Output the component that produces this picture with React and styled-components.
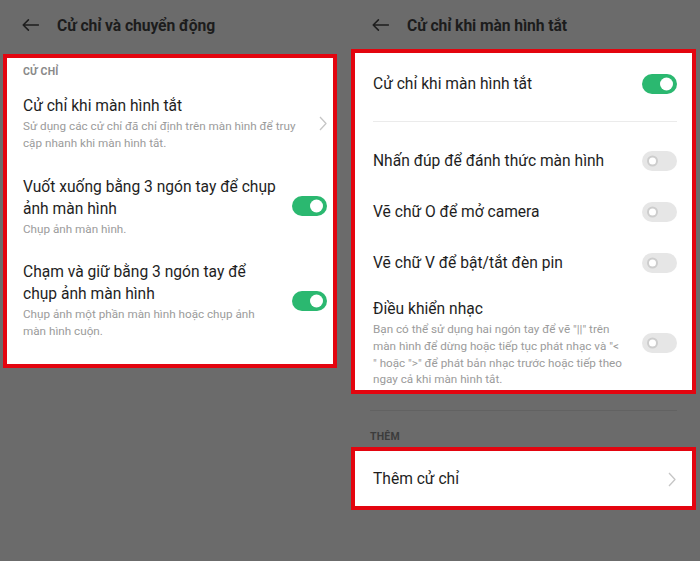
import React from 'react'
import styled, { createGlobalStyle } from 'styled-components'

const GlobalStyle = createGlobalStyle`
  html, body {
    margin: 0;
    padding: 0;
    background: #6b6b6b;
  }
  body {
    font-family: Roboto, "Noto Sans", "Liberation Sans", sans-serif;
    -webkit-font-smoothing: antialiased;
  }
`

const Screen = styled.div`
  display: grid;
  grid-template-columns: 345px 355px;
  width: 700px;
  height: 561px;
  overflow: hidden;
  background: #6b6b6b;
`

const Panel = styled.div`
  display: flex;
  flex-direction: column;
  padding: ${(p) => p.$pad};
`

const Header = styled.div`
  display: flex;
  align-items: center;
  height: 48px;
  padding-top: 1px;
  padding-left: ${(p) => p.$inset}px;
  gap: ${(p) => p.$gap}px;
`

const Title = styled.h1`
  margin: 0;
  font-size: 15.7px;
  font-weight: 700;
  color: #1c1c1c;
  letter-spacing: -0.1px;
`

const Card = styled.div`
  border: 4px solid #e3050f;
  background: #fff;
  margin-top: ${(p) => p.$top || 0}px;
  padding: ${(p) => p.$pad};
`

const SectionLabel = styled.div`
  font-size: 10.5px;
  font-weight: 700;
  line-height: 14px;
  letter-spacing: 0.2px;
  color: ${(p) => (p.$dark ? '#3c3c3c' : '#8a8a8a')};
  padding-top: ${(p) => p.$top || 0}px;
  padding-left: ${(p) => p.$left || 0}px;
  margin-bottom: ${(p) => p.$bottom || 0}px;
`

const Row = styled.div`
  display: flex;
  align-items: center;
  justify-content: space-between;
  gap: 10px;
  padding: ${(p) => p.$pad || '12px 0'};
`

const TextCol = styled.div`
  display: flex;
  flex-direction: column;
  min-width: 0;
`

const ItemTitle = styled.div`
  font-size: 15.6px;
  line-height: 22px;
  color: #1e1e1e;
  white-space: nowrap;
`

const ItemSub = styled.div`
  margin-top: 1px;
  font-size: 11.7px;
  line-height: 16.8px;
  color: #9b9b9b;
  white-space: nowrap;
`

const Divider = styled.div`
  height: 1px;
  background: ${(p) => p.$color || '#ebebeb'};
  margin: ${(p) => p.$margin};
`

const Track = styled.div`
  position: relative;
  flex: none;
  width: 35px;
  height: 20px;
  border-radius: 10px;
  background: ${(p) => (p.$on ? '#2bb870' : '#e6e6e6')};
`

const Knob = styled.span`
  position: absolute;
  top: 50%;
  transform: translateY(-50%);
  border-radius: 50%;
  background: #fff;
  ${(p) =>
    p.$on
      ? 'right: 4px; width: 13px; height: 13px;'
      : 'left: 5px; width: 7px; height: 7px; border: 2px solid #cdcdcd;'}
`

const Toggle = ({ on }) => (
  <Track $on={on}>
    <Knob $on={on} />
  </Track>
)

const Back = () => (
  <svg width="17" height="12" viewBox="0 0 17 12" fill="none">
    <path
      d="M1.2 6 H16.5 M6.4 0.9 L1.2 6 L6.4 11.1"
      stroke="#1e1e1e"
      strokeWidth="1.5"
      strokeLinecap="round"
      strokeLinejoin="round"
    />
  </svg>
)

const Chevron = () => (
  <svg width="8" height="15" viewBox="0 0 8 15" fill="none" style={{ flex: 'none' }}>
    <path d="M1 1 L7 7.5 L1 14" stroke="#c6c6c6" strokeWidth="1.3" strokeLinejoin="round" />
  </svg>
)

const App = () => (
  <>
    <GlobalStyle />
    <Screen>
      <Panel $pad="0 8px 0 3px">
        <Header $inset={19} $gap={18}>
          <Back />
          <Title>Cử chỉ và chuyển động</Title>
        </Header>
        <Card $top={5} $pad="0 6px 12px 16px">
          <SectionLabel $top={7} $bottom={4}>CỬ CHỈ</SectionLabel>
          <Row>
            <TextCol>
              <ItemTitle>Cử chỉ khi màn hình tắt</ItemTitle>
              <ItemSub>
                Sử dụng các cử chỉ đã chỉ định trên màn hình để truy
                <br />
                cập nhanh khi màn hình tắt.
              </ItemSub>
            </TextCol>
            <Chevron />
          </Row>
          <Row>
            <TextCol>
              <ItemTitle>
                Vuốt xuống bằng 3 ngón tay để chụp
                <br />
                ảnh màn hình
              </ItemTitle>
              <ItemSub>Chụp ảnh màn hình.</ItemSub>
            </TextCol>
            <Toggle on />
          </Row>
          <Row>
            <TextCol>
              <ItemTitle>
                Chạm và giữ bằng 3 ngón tay để
                <br />
                chụp ảnh màn hình
              </ItemTitle>
              <ItemSub>
                Chụp ảnh một phần màn hình hoặc chụp ảnh
                <br />
                màn hình cuộn.
              </ItemSub>
            </TextCol>
            <Toggle on />
          </Row>
        </Card>
      </Panel>

      <Panel $pad="0 4px 0 6px">
        <Header $inset={21} $gap={18}>
          <Back />
          <Title>Cử chỉ khi màn hình tắt</Title>
        </Header>
        <Card $pad="5px 15px 2px 18px">
          <Row $pad="14.5px 0">
            <ItemTitle>Cử chỉ khi màn hình tắt</ItemTitle>
            <Toggle on />
          </Row>
          <Divider $margin="12px 0 13px" />
          <Row $pad="14.5px 0">
            <ItemTitle>Nhấn đúp để đánh thức màn hình</ItemTitle>
            <Toggle />
          </Row>
          <Row $pad="14.5px 0">
            <ItemTitle>Vẽ chữ O để mở camera</ItemTitle>
            <Toggle />
          </Row>
          <Row $pad="14.5px 0">
            <ItemTitle>Vẽ chữ V để bật/tắt đèn pin</ItemTitle>
            <Toggle />
          </Row>
          <Row $pad="10px 0 0">
            <TextCol>
              <ItemTitle>Điều khiển nhạc</ItemTitle>
              <ItemSub>
                Bạn có thể sử dụng hai ngón tay để vẽ "||" trên
                <br />
                màn hình để dừng hoặc tiếp tục phát nhạc và "&lt;
                <br />
                " hoặc "&gt;" để phát bản nhạc trước hoặc tiếp theo
                <br />
                ngay cả khi màn hình tắt.
              </ItemSub>
            </TextCol>
            <Toggle />
          </Row>
        </Card>
        <Divider $color="#626262" $margin="16px 19px 0 19px" />
        <SectionLabel $dark $top={19} $bottom={3} $left={19}>
          THÊM
        </SectionLabel>
        <Card $pad="0 16px 0 18px">
          <Row $pad="17px 0 16px">
            <ItemTitle>Thêm cử chỉ</ItemTitle>
            <Chevron />
          </Row>
        </Card>
      </Panel>
    </Screen>
  </>
)

export default App
